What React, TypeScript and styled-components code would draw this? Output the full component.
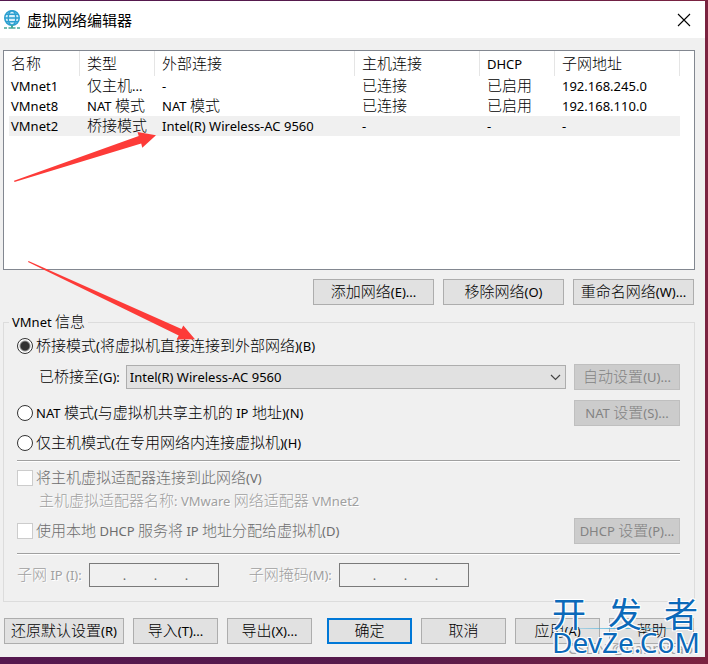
import React, { useState } from 'react';
import styled, { createGlobalStyle, css } from 'styled-components';

const latin = '"Noto Sans", "Noto Sans CJK SC", sans-serif';
const han = '"Noto Sans CJK SC", "Noto Sans", sans-serif';

const GlobalStyle = createGlobalStyle`
  *, *::before, *::after { box-sizing: border-box; }
  body {
    margin: 0;
    min-height: 100vh;
    background: linear-gradient(90deg, #55184f 0%, #561a4c 55%, #7b2340 100%);
    font: 13px/20px ${latin};
    color: #000;
  }
  button, input, select { font: inherit; color: inherit; margin: 0; }
`;

const Desktop = styled.div`
  padding: 1px 3px 7px 0;
`;

const Window = styled.main`
  position: relative;
  background: #f0f0f0;
`;

const TitleBar = styled.header`
  display: flex;
  align-items: center;
  height: 37px;
  padding: 0 12px 0 4px;
  gap: 7px;
  background: #fff;
`;

const Title = styled.h1`
  flex: 1;
  margin: 0;
  font: 400 15px/20px ${han};
`;

const CloseButton = styled.button`
  display: flex;
  padding: 2px;
  border: 0;
  background: none;
`;

const Content = styled.div`
  padding: 12px 10px 13px 3px;
`;

const HanRun = styled.span`
  font-family: ${han};
  font-size: 15px;
  font-weight: 300;
  line-height: 1;
`;

const ListBox = styled.div`
  height: 220px;
  border: 1px solid #828790;
  background: #fff;
  overflow: hidden;
`;

const NetworkTable = styled.table`
  width: 676px;
  table-layout: fixed;
  border-collapse: separate;
  border-spacing: 0;
`;

const HeadCell = styled.th`
  height: 25px;
  padding: 0 0 0 7px;
  border-right: 1px solid #e5e5e5;
  font-weight: 400;
  text-align: left;
  white-space: nowrap;
`;

const Row = styled.tr<{ $selected?: boolean }>`
  background: ${(p) =>
    p.$selected ? 'linear-gradient(90deg, #fff 5px, #f0f0f0 5px)' : 'none'};
`;

const Cell = styled.td`
  height: 20px;
  padding: 1px 0 0 7px;
  line-height: 19px;
  white-space: nowrap;
`;

const Actions = styled.div`
  display: flex;
  justify-content: flex-end;
  gap: 9px;
  margin: 9px 1px 7px 0;
`;

const Button = styled.button<{ $width: number; $primary?: boolean }>`
  flex: none;
  width: ${(p) => p.$width}px;
  height: 26px;
  padding: 0;
  border: 1px solid #adadad;
  background: #e1e1e1;
  line-height: 20px;
  white-space: nowrap;
  ${(p) => p.$primary && css`border: 2px solid #0078d7;`}
  &:disabled {
    border-color: #bfbfbf;
    background: #ccc;
    color: #838383;
  }
`;

const Group = styled.fieldset`
  min-width: 0;
  margin: 0;
  padding: 0 14px 6px 13px;
  border: 1px solid #dcdcdc;
`;

const Legend = styled.legend`
  height: 20px;
  margin-left: -8px;
  padding: 0 3px;
  line-height: 20px;
`;

const Line = styled.div<{ $height: number; $indent?: number }>`
  display: flex;
  align-items: center;
  height: ${(p) => p.$height}px;
  padding-left: ${(p) => p.$indent ?? 0}px;
  white-space: nowrap;
`;

const Choice = styled.label<{ $disabled?: boolean }>`
  display: flex;
  flex: 1;
  align-items: center;
  gap: 3px;
  color: ${(p) => (p.$disabled ? '#6d6d6d' : '#000')};
`;

const Radio = styled.input.attrs({ type: 'radio' })`
  appearance: none;
  width: 16px;
  height: 16px;
  border: 1px solid #333;
  border-radius: 50%;
  background: #fff;
  &:checked {
    background: radial-gradient(circle, #333 4px, #fff 6px);
  }
`;

const Checkbox = styled.input.attrs({ type: 'checkbox' })`
  appearance: none;
  width: 16px;
  height: 16px;
  border: 1px solid #ccc;
  background: #fff;
`;

const FieldLabel = styled.label`
  flex: none;
`;

const SelectWrap = styled.div`
  position: relative;
  flex: 1;
  margin: 0 8px 0 6px;
`;

const Select = styled.select`
  display: block;
  appearance: none;
  width: 100%;
  height: 24px;
  padding: 0 24px 0 3px;
  border: 1px solid #adadad;
  border-radius: 0;
  background: #e1e1e1;
`;

const Chevron = styled.svg`
  position: absolute;
  right: 5px;
  top: 9px;
  pointer-events: none;
`;

const Divider = styled.hr`
  height: 2px;
  margin: 0;
  border: 0;
  border-top: 1px solid #a0a0a0;
  border-bottom: 1px solid #fff;
`;

const Etched = styled.span`
  color: #a0a0a0;
  text-shadow: 1px 1px 0 #fff;
`;

const Address = styled.div`
  display: flex;
  width: 130px;
  height: 24px;
  margin: 0 30px 0 7px;
  padding: 0 2px 0 5px;
  border: 1px solid #7a7a7a;
  color: #6d6d6d;
`;

const Octet = styled.input`
  flex: 1;
  min-width: 0;
  padding: 0;
  border: 0;
  background: none;
  text-align: center;
`;

const Dot = styled.span`
  width: 3px;
  line-height: 22px;
`;

const Footer = styled.footer`
  display: flex;
  gap: 9px;
  margin: 16px 1px 0 1px;
`;

const FooterGroup = styled.div`
  display: flex;
  flex: 1;
  gap: 9px;
`;

const Arrows = styled.svg`
  position: absolute;
  left: 0;
  top: 0;
  pointer-events: none;
`;

const Watermark = styled.div`
  position: absolute;
  right: 7px;
  bottom: 1px;
  width: 146px;
  color: #0b69b9;
  text-shadow: 1px 1px 0 #fff, -1px -1px 0 #fff, 1px -1px 0 #fff, -1px 1px 0 #fff;
  pointer-events: none;
`;

const WatermarkHan = styled.div`
  display: flex;
  justify-content: space-between;
  font: 400 34px/30px ${han};
`;

const WatermarkRule = styled.div`
  height: 1px;
  background: linear-gradient(90deg, transparent, #4fb2dc 50%, transparent);
`;

const WatermarkName = styled.div`
  font: 400 28px/27px ${latin};
  white-space: nowrap;
`;

const Credit = styled.div`
  position: absolute;
  right: 12px;
  bottom: 1px;
  color: #a4a4a4;
  font-size: 15px;
  line-height: 16px;
  pointer-events: none;
`;

/** Han characters are set larger than the Latin text around them. */
function Mixed({ children }: { children: string }) {
  const runs = children.split(/([\u4e00-\u9fff]+)/).filter(Boolean);
  return (
    <span>
      {runs.map((run, i) =>
        /[\u4e00-\u9fff]/.test(run) ? <HanRun key={i}>{run}</HanRun> : run,
      )}
    </span>
  );
}

function GlobeIcon() {
  return (
    <svg width="16" height="20" viewBox="0 0 16 20" fill="none" aria-hidden="true">
      <circle cx="8" cy="8" r="7.2" fill="#d9f0fa" />
      <g stroke="#2b9fd0" strokeWidth="1.4">
        <circle cx="8" cy="8" r="7.2" strokeWidth="1.6" />
        <ellipse cx="8" cy="8" rx="3.8" ry="7.2" />
        <path d="M1 8h14M2.2 4.2h11.6M2.2 11.8h11.6" />
      </g>
      <path d="M8 15v3" stroke="#3fa99b" strokeWidth="2" />
      <path d="M0 18h3M4.5 18h7M13 18h3" stroke="#46a898" strokeWidth="1.6" />
    </svg>
  );
}

const columns = [
  { label: '名称', width: 76 },
  { label: '类型', width: 75 },
  { label: '外部连接', width: 200 },
  { label: '主机连接', width: 125 },
  { label: 'DHCP', width: 75 },
  { label: '子网地址', width: 125 },
];

const networks = [
  ['VMnet1', '仅主机...', '-', '已连接', '已启用', '192.168.245.0'],
  ['VMnet8', 'NAT 模式', 'NAT 模式', '已连接', '已启用', '192.168.110.0'],
  ['VMnet2', '桥接模式', 'Intel(R) Wireless-AC 9560', '-', '-', '-'],
];

function AddressField({ id }: { id: string }) {
  return (
    <Address role="group" aria-labelledby={`${id}-label`}>
      {[0, 1, 2, 3].map((n) => (
        <React.Fragment key={n}>
          {n > 0 && <Dot>.</Dot>}
          <Octet id={n === 0 ? id : undefined} aria-label={`${n + 1}`} disabled />
        </React.Fragment>
      ))}
    </Address>
  );
}

export default function App() {
  const [mode, setMode] = useState('bridged');
  const [selected, setSelected] = useState('VMnet2');

  return (
    <Desktop>
      <GlobalStyle />
      <Window>
        <TitleBar>
          <GlobeIcon />
          <Title>虚拟网络编辑器</Title>
          <CloseButton aria-label="关闭">
            <svg width="14" height="14" viewBox="0 0 14 14" stroke="#000" strokeWidth="1.1" aria-hidden="true">
              <path d="M1 1l12 12M13 1L1 13" />
            </svg>
          </CloseButton>
        </TitleBar>

        <Content>
          <ListBox>
            <NetworkTable>
              <colgroup>
                {columns.map((c) => (
                  <col key={c.label} width={c.width} />
                ))}
              </colgroup>
              <thead>
                <tr>
                  {columns.map((c) => (
                    <HeadCell key={c.label} scope="col"><Mixed>{c.label}</Mixed></HeadCell>
                  ))}
                </tr>
              </thead>
              <tbody>
                {networks.map((cells) => (
                  <Row key={cells[0]} $selected={cells[0] === selected} onClick={() => setSelected(cells[0])}>
                    {cells.map((text, i) => (
                      <Cell key={i}><Mixed>{text}</Mixed></Cell>
                    ))}
                  </Row>
                ))}
              </tbody>
            </NetworkTable>
          </ListBox>

          <Actions>
            <Button $width={121}><Mixed>添加网络(E)...</Mixed></Button>
            <Button $width={121}><Mixed>移除网络(O)</Mixed></Button>
            <Button $width={121}><Mixed>重命名网络(W)...</Mixed></Button>
          </Actions>

          <Group>
            <Legend><Mixed>VMnet 信息</Mixed></Legend>
            <Line $height={28}>
              <Choice>
                <Radio name="mode" checked={mode === 'bridged'} onChange={() => setMode('bridged')} />
                <Mixed>桥接模式(将虚拟机直接连接到外部网络)(B)</Mixed>
              </Choice>
            </Line>
            <Line $height={34} $indent={22}>
              <FieldLabel htmlFor="adapter"><Mixed>已桥接至(G):</Mixed></FieldLabel>
              <SelectWrap>
                <Select id="adapter">
                  <option>Intel(R) Wireless-AC 9560</option>
                </Select>
                <Chevron width="11" height="7" viewBox="0 0 11 7" fill="none" stroke="#444" strokeWidth="1.2" aria-hidden="true">
                  <path d="M1 1l4.5 4.5L10 1" />
                </Chevron>
              </SelectWrap>
              <Button $width={106} disabled><Mixed>自动设置(U)...</Mixed></Button>
            </Line>
            <Line $height={38}>
              <Choice>
                <Radio name="mode" checked={mode === 'nat'} onChange={() => setMode('nat')} />
                <Mixed>NAT 模式(与虚拟机共享主机的 IP 地址)(N)</Mixed>
              </Choice>
              <Button $width={106} disabled><Mixed>NAT 设置(S)...</Mixed></Button>
            </Line>
            <Line $height={22}>
              <Choice>
                <Radio name="mode" checked={mode === 'host'} onChange={() => setMode('host')} />
                <Mixed>仅主机模式(在专用网络内连接虚拟机)(H)</Mixed>
              </Choice>
            </Line>
            <Line $height={6} />
            <Divider />
            <Line $height={32}>
              <Choice $disabled>
                <Checkbox disabled />
                <Mixed>将主机虚拟适配器连接到此网络(V)</Mixed>
              </Choice>
            </Line>
            <Line $height={14} $indent={22}>
              <Etched><Mixed>主机虚拟适配器名称: VMware 网络适配器 VMnet2</Mixed></Etched>
            </Line>
            <Line $height={45}>
              <Choice $disabled>
                <Checkbox disabled />
                <Mixed>使用本地 DHCP 服务将 IP 地址分配给虚拟机(D)</Mixed>
              </Choice>
              <Button $width={106} disabled><Mixed>DHCP 设置(P)...</Mixed></Button>
            </Line>
            <Divider />
            <Line $height={40}>
              <FieldLabel id="subnet-label" htmlFor="subnet"><Etched><Mixed>子网 IP (I):</Mixed></Etched></FieldLabel>
              <AddressField id="subnet" />
              <FieldLabel id="mask-label" htmlFor="mask"><Etched><Mixed>子网掩码(M):</Mixed></Etched></FieldLabel>
              <AddressField id="mask" />
            </Line>
          </Group>

          <Footer>
            <FooterGroup>
              <Button $width={120}><Mixed>还原默认设置(R)</Mixed></Button>
              <Button $width={85}><Mixed>导入(T)...</Mixed></Button>
              <Button $width={85}><Mixed>导出(X)...</Mixed></Button>
            </FooterGroup>
            <Button $width={85} $primary><Mixed>确定</Mixed></Button>
            <Button $width={85}><Mixed>取消</Mixed></Button>
            <Button $width={85}><Mixed>应用(A)</Mixed></Button>
            <Button $width={85}><Mixed>帮助</Mixed></Button>
          </Footer>
        </Content>

        <Arrows width="200" height="345" viewBox="0 1 200 345" fill="#fd3b38" aria-hidden="true">
          <path d="M14 180.8L138.7 136L137.5 132L156 135.3L142.3 147.8L141.2 143.5L14.5 182Z" />
          <path d="M28.5 261L181.5 329L183.3 325.6L195 339.2L176.7 339.6L178.7 335.5L28 262Z" />
        </Arrows>

        <Credit>CSDN @tianmitao</Credit>
        <Watermark>
          <WatermarkHan><span>开</span><span>发</span><span>者</span></WatermarkHan>
          <WatermarkRule />
          <WatermarkName>DevZe.CoM</WatermarkName>
        </Watermark>
      </Window>
    </Desktop>
  );
}
